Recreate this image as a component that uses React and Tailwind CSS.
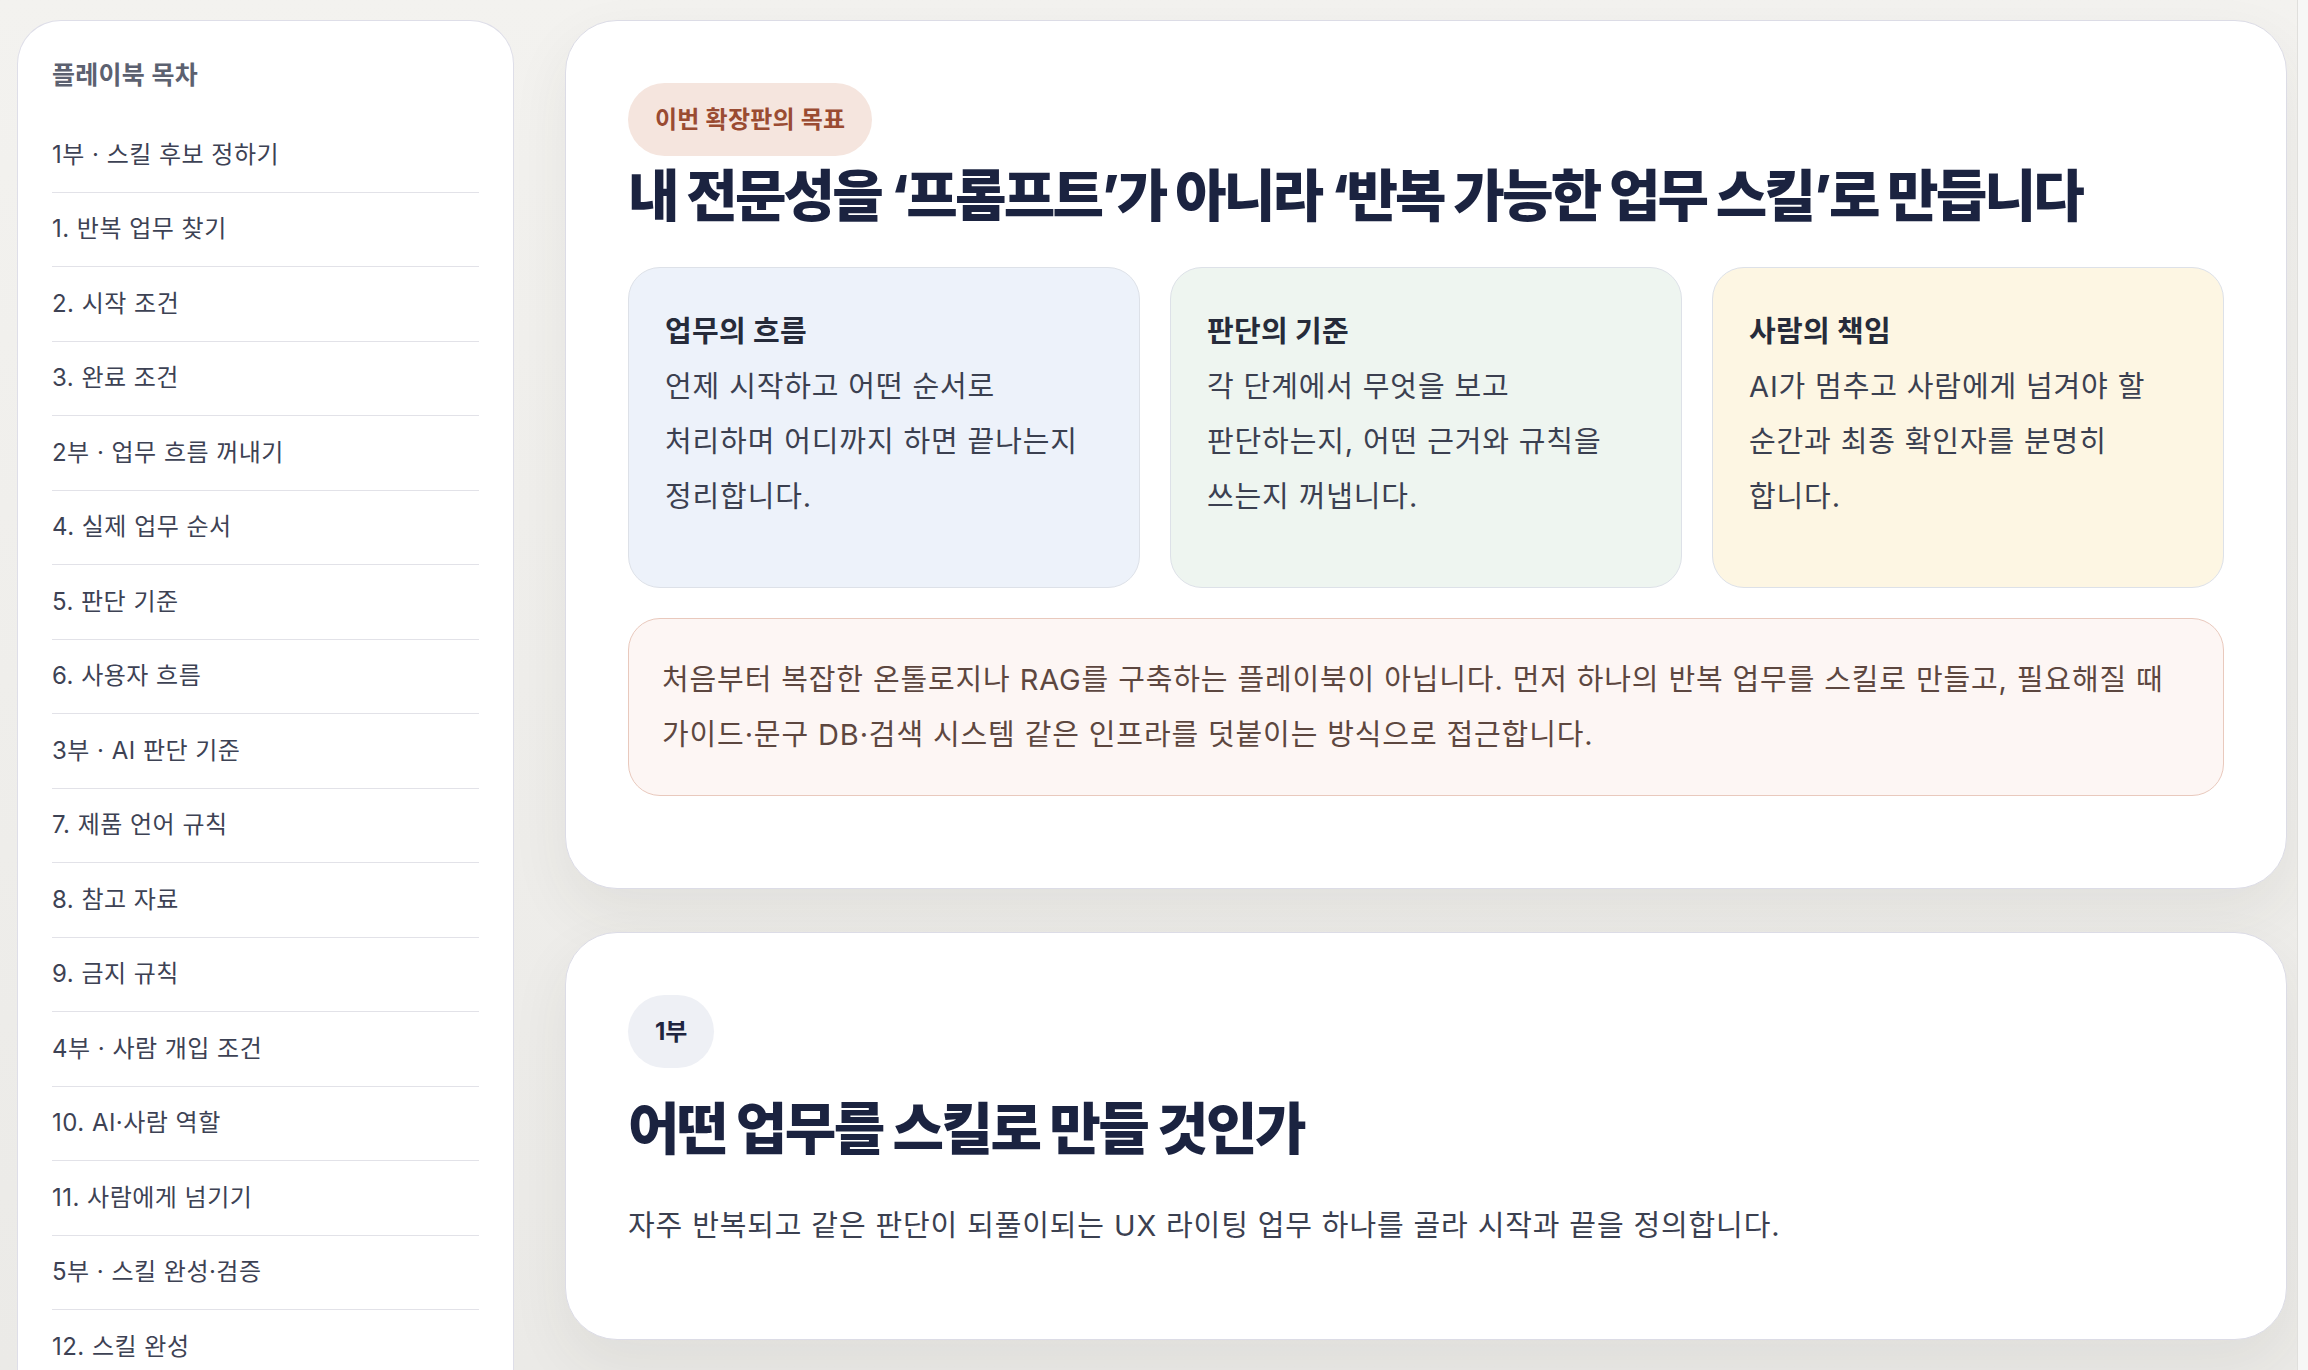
const toc = [
  "1부 · 스킬 후보 정하기",
  "1. 반복 업무 찾기",
  "2. 시작 조건",
  "3. 완료 조건",
  "2부 · 업무 흐름 꺼내기",
  "4. 실제 업무 순서",
  "5. 판단 기준",
  "6. 사용자 흐름",
  "3부 · AI 판단 기준",
  "7. 제품 언어 규칙",
  "8. 참고 자료",
  "9. 금지 규칙",
  "4부 · 사람 개입 조건",
  "10. AI·사람 역할",
  "11. 사람에게 넘기기",
  "5부 · 스킬 완성·검증",
  "12. 스킬 완성",
];

const pillars = [
  {
    title: "업무의 흐름",
    lines: ["언제 시작하고 어떤 순서로", "처리하며 어디까지 하면 끝나는지", "정리합니다."],
    tone: "bg-[#edf2fa]",
  },
  {
    title: "판단의 기준",
    lines: ["각 단계에서 무엇을 보고", "판단하는지, 어떤 근거와 규칙을", "쓰는지 꺼냅니다."],
    tone: "bg-[#eef5f0]",
  },
  {
    title: "사람의 책임",
    lines: ["AI가 멈추고 사람에게 넘겨야 할", "순간과 최종 확인자를 분명히", "합니다."],
    tone: "bg-[#fdf6e3]",
  },
];

const Sidebar = () => (
  <aside className="w-[497px] shrink-0 self-start rounded-t-[44px] border-[1.5px] border-b-0 border-[#dedee8] bg-white px-[34px] pt-[38px]">
    <div className="mb-[27px] text-[25px] font-semibold leading-[32px] tracking-[0.01em] text-[#5c6170]">
      플레이북 목차
    </div>
    <nav className="flex flex-col">
      {toc.map((item) => (
        <a
          key={item}
          className="flex h-[74.5px] items-center border-b-[1.5px] border-[#e2e2e8] text-[24px] tracking-[0.02em] text-[#3d4254]"
        >
          {item}
        </a>
      ))}
    </nav>
  </aside>
);

const Card = ({ className = "", children }) => (
  <section
    className={`rounded-[52px] border-[1.5px] border-[#dcdce6] bg-white px-[62px] pt-[62px] shadow-[0_24px_60px_rgba(60,50,40,0.07)] ${className}`}
  >
    {children}
  </section>
);

export default function App() {
  return (
    <div className="flex h-screen overflow-hidden bg-gradient-to-b from-[#f3f2ef] to-[#ebeae7] font-['Inter','Noto_Sans_CJK_KR',sans-serif]">
      <div className="flex flex-1 gap-[51px] pl-[17px] pt-[20px] pr-[10px]">
        <Sidebar />

        <main className="flex flex-1 flex-col gap-[43px]">
          <Card className="pb-[92px]">
            <span className="inline-flex h-[73px] items-center rounded-full bg-[#f5e5de] px-[27px] text-[24px] font-bold tracking-[0.01em] text-[#9a4b32]">
              이번 확장판의 목표
            </span>
            <h1 className="mt-[5px] text-[56px] font-extrabold leading-[70px] tracking-[-0.05em] text-[#1b2340]">
              내 전문성을 ‘프롬프트’가 아니라 ‘반복 가능한 업무 스킬’로 만듭니다
            </h1>

            <div className="mt-[36px] grid grid-cols-3 gap-[30px]">
              {pillars.map((p) => (
                <div
                  key={p.title}
                  className={`h-[321px] rounded-[32px] border-[1.5px] border-[#dde1e8] px-[36px] pt-[36px] ${p.tone}`}
                >
                  <div className="text-[29px] font-bold leading-[55px] tracking-[0.01em] text-[#262b3a]">
                    {p.title}
                  </div>
                  {p.lines.map((l) => (
                    <div key={l} className="whitespace-nowrap text-[29px] leading-[55px] tracking-[0.03em] text-[#3b4050]">
                      {l}
                    </div>
                  ))}
                </div>
              ))}
            </div>

            <div className="mt-[30px] rounded-[32px] border-[1.5px] border-[#e9c9bd] bg-[#fdf6f4] px-[33px] py-[33px] text-[29px] leading-[55px] tracking-[0.03em] text-[#5d4740]">
              <div className="whitespace-nowrap">
                처음부터 복잡한 온톨로지나 RAG를 구축하는 플레이북이 아닙니다. 먼저 하나의 반복 업무를 스킬로 만들고, 필요해질 때
              </div>
              <div className="whitespace-nowrap">
                가이드·문구 DB·검색 시스템 같은 인프라를 덧붙이는 방식으로 접근합니다.
              </div>
            </div>
          </Card>

          <Card className="pb-[86px]">
            <span className="inline-flex h-[73px] items-center rounded-full bg-[#eef0f5] px-[27px] text-[24px] font-bold text-[#1e2540]">
              1부
            </span>
            <h2 className="mt-[26px] text-[56px] font-extrabold leading-[70px] tracking-[-0.045em] text-[#1b2340]">
              어떤 업무를 스킬로 만들 것인가
            </h2>
            <p className="mt-[34px] text-[29px] leading-[55px] tracking-[0.03em] text-[#3b4050]">
              자주 반복되고 같은 판단이 되풀이되는 UX 라이팅 업무 하나를 골라 시작과 끝을 정의합니다.
            </p>
          </Card>
        </main>
      </div>
      <div className="w-[11px] shrink-0 border-l-[1.5px] border-[#e0dfdc] bg-[#f7f7f6]" />
    </div>
  );
}
